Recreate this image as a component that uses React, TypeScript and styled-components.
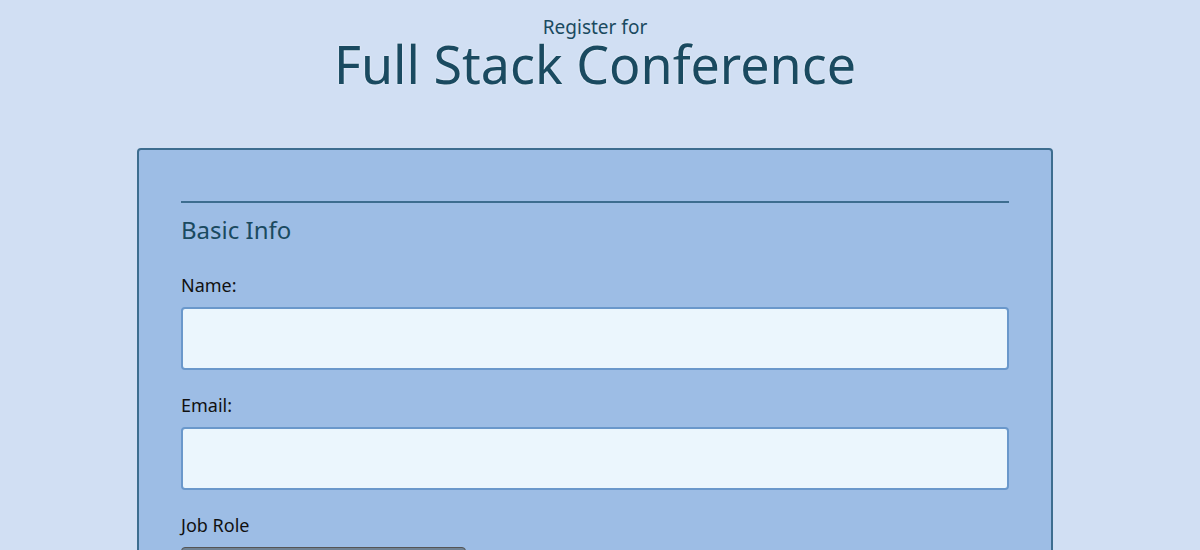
import {FC} from 'react';
import styled, {createGlobalStyle} from 'styled-components';

const GlobalStyle = createGlobalStyle`
  * {
    box-sizing: border-box;
  }
  body {
    margin: 0;
    background-color: #d1dff3;
    font-family: 'Noto Sans', 'Open Sans', sans-serif;
    color: #111;
  }
`

const fields = [
    {id: 'name', label: 'Name:'},
    {id: 'email', label: 'Email:'},
]

const App: FC = () => {
    return (
        <>
            <GlobalStyle/>
            <Page>
                <Header>
                    <SubTitle>Register for</SubTitle>
                    <Title>Full Stack Conference</Title>
                </Header>
                <Form>
                    <Fieldset>
                        <Legend>Basic Info</Legend>
                        {fields.map(f => (
                            <Field key={f.id}>
                                <Label htmlFor={f.id}>{f.label}</Label>
                                <Input id={f.id} type="text"/>
                            </Field>
                        ))}
                        <Field>
                            <Label htmlFor="title">Job Role</Label>
                            <Select id="title">
                                <option>Full Stack JavaScript Developer</option>
                            </Select>
                        </Field>
                    </Fieldset>
                </Form>
            </Page>
        </>
    );
};

export default App;

const Page = styled.main`
  display: flex;
  flex-direction: column;
  align-items: center;
  padding: 15px 10px 0 0;
`

const Header = styled.header`
  display: flex;
  flex-direction: column;
  align-items: center;
  color: #1a4a60;
`

const SubTitle = styled.p`
  margin: 0;
  font-size: 19px;
  line-height: 24px;
`

const Title = styled.h1`
  margin: 0;
  font-size: 52px;
  font-weight: 400;
  line-height: 50px;
  text-shadow: 0 0 2px #f4f8fd;
`

const Form = styled.form`
  width: 916px;
  margin-top: 59px;
  padding: 51px 42px 0;
  background-color: #9dbde5;
  border: 2px solid #3d6d8f;
  border-radius: 4px;
`

const Fieldset = styled.fieldset`
  margin: 0;
  padding: 0;
  border: none;
  border-top: 2px solid #3d6d8f;
  min-width: 0;
`

const Legend = styled.h2`
  margin: 11px 0 0;
  padding-bottom: 4px;
  font-size: 24px;
  font-weight: 400;
  line-height: 32px;
  color: #1a4a60;
`

const Field = styled.div`
  display: flex;
  flex-direction: column;
  margin-top: 23px;
`

const Label = styled.label`
  font-size: 18px;
  line-height: 24px;
  margin-bottom: 10px;
`

const Input = styled.input`
  height: 63px;
  width: 100%;
  background-color: #ebf6fd;
  border: 2px solid #6a98cb;
  border-radius: 4px;
  padding: 0 12px;
  font-size: 18px;
`

const Select = styled.select`
  height: 40px;
  width: 285px;
  background-color: #6f8294;
  border: 1px solid #555;
  border-radius: 4px;
`
